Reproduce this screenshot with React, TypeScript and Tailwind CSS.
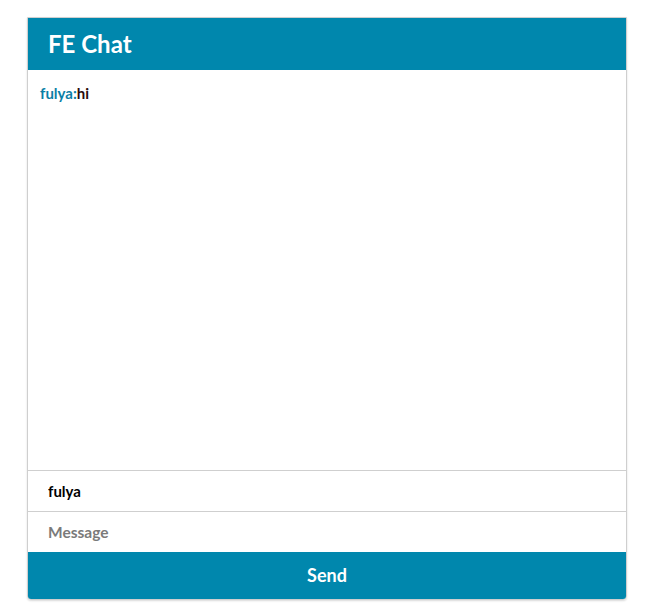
import React, { useState } from "react";

const App = () => {
  const [name, setName] = useState("fulya");
  const [message, setMessage] = useState("");
  const messages = [{ user: "fulya", text: "hi" }];

  return (
    <div className="w-full min-h-[616px] bg-white pt-[17px] font-['Lato',sans-serif]">
      <div className="ml-[27px] w-[600px] border border-[#cfcfcf] rounded-b-[4px] overflow-hidden shadow-[0_1px_2px_rgba(0,0,0,0.15)]">
        <div className="h-[52px] bg-[#0087ad] flex items-center px-[20px]">
          <h1 className="text-white text-[24px] font-bold">FE Chat</h1>
        </div>
        <div className="h-[400px] px-[12px] pt-[12px]">
          {messages.map((m, i) => (
            <p key={i} className="text-[15px] font-bold">
              <span className="text-[#0b7fa6]">{m.user}:</span>
              <span className="text-[#2a0d0d]">{m.text}</span>
            </p>
          ))}
        </div>
        <input
          value={name}
          onChange={(e) => setName(e.target.value)}
          className="block w-full h-[41px] border-t border-[#cfcfcf] px-[20px] text-[15px] font-bold text-black outline-none"
        />
        <input
          value={message}
          onChange={(e) => setMessage(e.target.value)}
          placeholder="Message"
          className="block w-full h-[41px] border-t border-[#cfcfcf] px-[20px] text-[15.5px] font-bold text-black placeholder:text-[#7a7a7a] outline-none"
        />
        <button className="block w-full h-[47px] bg-[#0087ad] text-white text-[18px] font-bold">
          Send
        </button>
      </div>
    </div>
  );
};

export default App;
